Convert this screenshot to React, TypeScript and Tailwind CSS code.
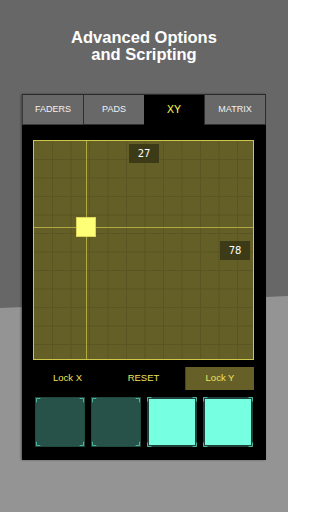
const tabs = ["FADERS", "PADS", "XY", "MATRIX"];
const pads = [false, false, true, true];

function Corners({ color }: { color: string }) {
  return (
    <svg className="absolute inset-0 w-full h-full" viewBox="0 0 50 50" preserveAspectRatio="none">
      <path
        d="M0.5 4.5V0.5H4.5M45.5 0.5H49.5V4.5M49.5 45.5V49.5H45.5M4.5 49.5H0.5V45.5"
        fill="none"
        stroke={color}
        strokeWidth="1"
      />
    </svg>
  );
}

function XYPad() {
  return (
    <div className="relative w-[221px] h-[220px] bg-[#645e27] border border-[#cfc64c] overflow-hidden">
      {/* grid */}
      <svg className="absolute inset-0 w-full h-full" viewBox="0 0 219 218">
        {Array.from({ length: 12 }).map((_, i) => (
          <g key={i}>
            <line x1={18.5 * (i + 1)} y1="0" x2={18.5 * (i + 1)} y2="218" stroke="#5a5522" strokeWidth="1" />
            <line x1="0" y1={18.5 * (i + 1)} x2="219" y2={18.5 * (i + 1)} stroke="#5a5522" strokeWidth="1" />
          </g>
        ))}
      </svg>
      {/* crosshair */}
      <div className="absolute top-0 bottom-0 left-[52px] w-px bg-[#b0a841]" />
      <div className="absolute left-0 right-0 top-[86px] h-px bg-[#b0a841]" />
      {/* handle */}
      <div className="absolute left-[42px] top-[76px] w-5 h-5 bg-[#ffff77] border border-[#ddd55c]" />
      {/* value labels */}
      <div className="absolute left-[95px] top-[3px] w-[30px] h-[19px] bg-[#3c3a17] flex items-center justify-center text-[10px] text-white font-['DejaVu_Sans',sans-serif]">
        27
      </div>
      <div className="absolute left-[186px] top-[100px] w-[30px] h-[19px] bg-[#3c3a17] flex items-center justify-center text-[10px] text-white font-['DejaVu_Sans',sans-serif]">
        78
      </div>
    </div>
  );
}

export default function App() {
  return (
    <div className="relative w-[288px] h-[512px] overflow-hidden bg-[#676767] font-['Liberation_Sans',Arial,sans-serif]">
      {/* lighter floor behind the device */}
      <div className="absolute inset-0 bg-[#949494] [clip-path:polygon(0_308px,100%_296px,100%_100%,0_100%)]" />

      <div className="relative flex flex-col items-center">
        <h1 className="pt-[29px] text-center text-white font-bold text-[16.5px] leading-[17px]">
          Advanced Options
          <br />
          and Scripting
        </h1>

        <div className="mt-[31px] w-[244px] bg-black shadow-[-1px_0_2px_rgba(0,0,0,0.4)] flex flex-col">
          {/* tabs */}
          <div className="flex h-[31px] border-t border-[#2a2a2a]">
            {tabs.map((t, i) => (
              <div
                key={t}
                className={
                  t === "XY"
                    ? "flex-1 flex items-center justify-center bg-black text-[#ffff55] text-[10.5px]"
                    : "flex-1 flex items-center justify-center bg-[#686868] text-[#f2f2f2] text-[9px] border-b border-[#2e2e2e] " +
                      (i === 0 ? "border-l border-[#3a3a3a]" : "border-l border-[#2e2e2e]") +
                      (i === 3 ? " border-r" : "")
                }
              >
                {t}
              </div>
            ))}
          </div>

          <div className="pl-[11px] pt-[15px] pb-[13px] flex flex-col">
            <XYPad />

            {/* buttons */}
            <div className="mt-[7px] w-[221px] grid grid-cols-3 gap-[7px] h-[23px] text-[9.5px] text-[#ece25e]">
              <div className="flex items-center justify-center">Lock X</div>
              <div className="flex items-center justify-center">RESET</div>
              <div className="flex items-center justify-center bg-[#666028] border-l border-[#4a4519]">Lock Y</div>
            </div>

            {/* pads */}
            <div className="mt-[7px] ml-[2px] flex gap-[6px]">
              {pads.map((on, i) =>
                on ? (
                  <div key={i} className="relative w-[50px] h-[50px] bg-[#1f3f38] p-[2px]">
                    <div className="w-full h-full bg-[#76ffe0]" />
                    <Corners color="#4fb49d" />
                  </div>
                ) : (
                  <div key={i} className="relative w-[50px] h-[50px] bg-[#275249] border border-[#214940]">
                    <Corners color="#52bba3" />
                  </div>
                )
              )}
            </div>
          </div>
        </div>
      </div>
    </div>
  );
}
